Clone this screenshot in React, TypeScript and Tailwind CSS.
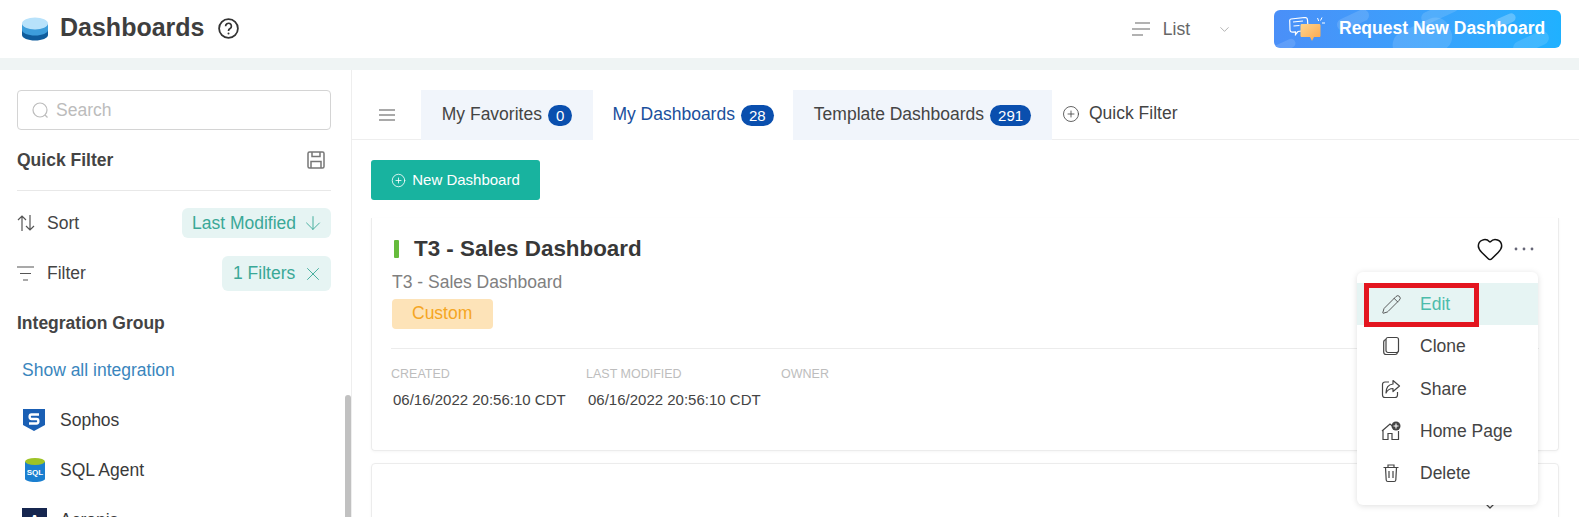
import { ChevronDown, CirclePlus, Heart, X, ArrowDown, Pencil } from 'lucide-react'

function StackLogo() {
  return (
    <svg width="26" height="26" viewBox="0 0 26 26">
      <path d="M0 13v6c0 3 6 5.500 13 5.500s13-2.500 13-5.500v-6z" fill="#0f5c9c" />
      <path d="M0 8v6c0 3 6 5.500 13 5.500s13-2.500 13-5.500V8z" fill="#3d9ddb" />
      <ellipse cx="13" cy="7.500" rx="13" ry="6" fill="#b8e2fb" />
    </svg>
  )
}

function HelpIcon() {
  return (
    <svg width="21" height="21" viewBox="0 0 21 21" fill="none" stroke="#333" strokeWidth="1.800">
      <circle cx="10.500" cy="10.500" r="9.400" />
      <path d="M7.600 8.200a2.900 2.900 0 1 1 4.500 2.400c-1 .6-1.600 1.200-1.600 2.300" strokeWidth="1.700" />
      <circle cx="10.500" cy="15.500" r="1" fill="#333" stroke="none" />
    </svg>
  )
}

function ListIcon() {
  return (
    <svg width="19" height="14" viewBox="0 0 19 14" fill="none" stroke="#666" strokeWidth="1.200">
      <path d="M3 1h15M0 7h18M0 13h11" />
    </svg>
  )
}

function ChatIcon() {
  return (
    <svg width="36" height="24" viewBox="0 0 36 24" fill="none">
      <defs>
        <linearGradient id="orange" x1="0" y1="0" x2="1" y2="1">
          <stop offset="0" stopColor="#fdd58f" />
          <stop offset="1" stopColor="#fba64c" />
        </linearGradient>
      </defs>
      <path d="M2 2l14-1.500c1.500 0 2.500 1 2.500 2.500l.5 8c0 1.500-1 2.500-2.500 2.500L9 14.500 6.500 17.500V15L3.500 15.200C2 15.200 1 14.200 1 13L.7 3.500C.7 2.800 1.200 2.200 2 2z" stroke="#fff" strokeWidth="1.200" />
      <path d="M4 5l10-1M4.500 9l6-.5" stroke="#fff" strokeWidth="1.100" />
      <path d="M13 7h17c1 0 1.500.5 1.500 1.500v10c0 1-.5 1.500-1.500 1.500h-5l-2 4-2-4h-8c-1 0-1.500-.5-1.500-1.500v-10C11.500 7.500 12 7 13 7z" fill="url(#orange)" />
      <path d="M28.500 1l1.200 3M33 .5l-1.500 3M36 6h-3" stroke="#fff" strokeWidth="1" />
    </svg>
  )
}

function ButtonBlobs() {
  return (
    <svg className="absolute left-0 top-0" width="287" height="38" viewBox="0 0 287 38" fill="#fff" fillOpacity="0.13">
      <rect x="-2" y="32" width="24" height="9" rx="4.500" transform="rotate(-25 10 36)" />
      <rect x="62" y="4" width="34" height="12" rx="6" transform="rotate(-25 79 10)" />
      <rect x="118" y="14" width="60" height="34" rx="14" transform="rotate(-25 148 30)" />
      <rect x="146" y="-4" width="40" height="12" rx="6" transform="rotate(-25 166 2)" />
      <rect x="220" y="6" width="22" height="9" rx="4.500" transform="rotate(-25 231 10)" fillOpacity="0.25" />
      <rect x="238" y="26" width="38" height="14" rx="7" transform="rotate(-25 257 33)" />
    </svg>
  )
}

function SearchGlyph() {
  return (
    <svg width="17" height="17" viewBox="0 0 17 17" fill="none" stroke="#bcbcbc" strokeWidth="1.200">
      <circle cx="8" cy="8" r="7" />
      <path d="M13 13l2.500 2.500" />
    </svg>
  )
}

function SaveGlyph() {
  return (
    <svg width="18" height="18" viewBox="0 0 18 18" fill="none" stroke="#777" strokeWidth="1.500">
      <path d="M2.500 1h13c.8 0 1.500.7 1.500 1.500v13c0 .8-.7 1.500-1.500 1.500h-13C1.700 17 1 16.300 1 15.500v-13C1 1.700 1.700 1 2.500 1z" />
      <path d="M5 1v4.500h8V1M4 17v-6.500h10V17" />
    </svg>
  )
}

function SortGlyph() {
  return (
    <svg width="18" height="16" viewBox="0 0 18 16" fill="none" stroke="#555" strokeWidth="1.200">
      <path d="M5 16V1M1 5l4-4 4 4M13 0v15M9 11l4 4 4-4" />
    </svg>
  )
}

function FilterLines() {
  return (
    <svg width="18" height="15" viewBox="0 0 18 15" fill="none" stroke="#555" strokeWidth="1.200">
      <path d="M0 1h17M3 7.500h11M6 14h5" />
    </svg>
  )
}

function DotsGlyph() {
  return (
    <svg width="20" height="4" viewBox="0 0 20 4" fill="#667">
      <circle cx="2" cy="2" r="1.400" />
      <circle cx="10" cy="2" r="1.400" />
      <circle cx="18" cy="2" r="1.400" />
    </svg>
  )
}

function SophosLogo() {
  return (
    <svg width="22" height="22" viewBox="0 0 22 22">
      <path d="M0 0h22v16l-11 6-11-6z" fill="#1a5fb4" />
      <path d="M16 5.500H8.500C6 5.500 6 10 8.500 10h5c2.500 0 2.500 4.500 0 4.500H6" fill="none" stroke="#fff" strokeWidth="2.400" />
    </svg>
  )
}

function SqlLogo() {
  return (
    <svg width="20" height="24" viewBox="0 0 20 24">
      <path d="M0 4v17c0 1.500 4.500 3 10 3s10-1.500 10-3V4z" fill="#1a7fd0" />
      <ellipse cx="10" cy="3.500" rx="10" ry="3.500" fill="#9dc326" />
      <text x="10" y="17" textAnchor="middle" fontSize="8" fontWeight="700" fill="#fff" fontFamily="Liberation Sans, sans-serif">SQL</text>
    </svg>
  )
}

function CloneGlyph() {
  return (
    <svg width="20" height="20" viewBox="0 0 20 20" fill="none" stroke="#444" strokeWidth="1.200">
      <rect x="5" y="1.500" width="12.500" height="15" rx="2" />
      <path d="M5 3.500C3.500 3.800 2.700 4.500 2.700 6v10c0 1.600 1 2.500 2.500 2.500h9c1.300 0 2-.6 2.300-2" />
    </svg>
  )
}

function ShareGlyph() {
  return (
    <svg width="20" height="20" viewBox="0 0 20 20" fill="none" stroke="#444" strokeWidth="1.200">
      <path d="M8 3H4C2.500 3 1.500 4 1.500 5.500V16c0 1.500 1 2.500 2.500 2.500h10c1.500 0 2.500-1 2.500-2.500v-3" />
      <path d="M12 1.500l6.500 5.500-6.500 5.500V9.500C9 9.500 6.500 11 5 14c0-5 2.500-8.500 7-9z" strokeLinejoin="round" />
    </svg>
  )
}

function HomePlusIcon() {
  return (
    <svg width="20" height="20" viewBox="0 0 20 20" fill="none" stroke="#444" strokeWidth="1.200">
      <path d="M1 10l8-7 3 2.500M2 9.500v9h5v-6h4v6h6.500V10" />
      <circle cx="15" cy="5" r="4.500" fill="#444" stroke="none" />
      <path d="M15 2.500v5M12.500 5h5" stroke="#fff" strokeWidth="1.100" />
    </svg>
  )
}

function TrashGlyph() {
  return (
    <svg width="20" height="20" viewBox="0 0 20 20" fill="none" stroke="#444" strokeWidth="1.200">
      <path d="M2.500 4.500h15M7 4.500V2h6v2.500M4.500 4.500l.7 12.500c.1 1 .7 1.500 1.600 1.500h6.400c.9 0 1.500-.5 1.600-1.500l.7-12.500M8 8v7M12 8v7" />
    </svg>
  )
}

function Tab(props: { label: string; count: string; active?: boolean; className: string }) {
  return (
    <div
      className={`h-[50px] pb-[2px] flex items-center justify-center gap-[6px] text-[17.500px] ${props.className} ${
        props.active ? 'bg-white text-[#1a4f9c]' : 'bg-[#f1f5fb] text-[#444]'
      }`}
    >
      {props.label}
      <span className="h-[21px] px-[8px] rounded-full bg-[#0a4fae] text-white text-[15px] leading-[21px] mt-[2px]">{props.count}</span>
    </div>
  )
}

function MenuItem(props: { icon: React.ReactNode; label: string; active?: boolean }) {
  return (
    <div className={`h-[42.300px] flex items-center text-[17.500px] ${props.active ? 'bg-[#e6f4f3] text-[#4cbcab]' : 'text-[#444]'}`}>
      <div className="w-[63px] pl-[24px] flex text-[#444]">{props.icon}</div>
      {props.label}
    </div>
  )
}

export default function App() {
  return (
    <div className="h-[517px] overflow-hidden bg-white text-[#444] font-['Liberation_Sans',Arial,sans-serif]">
      <header className="h-[58px] flex items-center pl-[22px] pr-[18px]">
        <StackLogo />
        <h1 className="ml-[12px] -mt-[2px] text-[25px] font-bold text-[#3e3e3e]">Dashboards</h1>
        <div className="ml-[14px] -mt-[2px]">
          <HelpIcon />
        </div>
        <div className="ml-auto flex items-center">
          <ListIcon />
          <span className="ml-[12px] text-[17.500px] text-[#666]">List</span>
          <ChevronDown className="ml-[27px] w-[15px] h-[15px] text-[#999]" strokeWidth={1.200} />
          <button className="ml-[42px] relative overflow-hidden w-[287px] h-[38px] rounded-[6px] bg-gradient-to-r from-[#4a8ff8] to-[#1fb1ff] flex items-center pl-[15px]">
            <ButtonBlobs />
            <span className="relative flex">
              <ChatIcon />
            </span>
            <span className="relative ml-[14px] -mt-[2px] text-[17.500px] font-bold text-white">Request New Dashboard</span>
          </button>
        </div>
      </header>
      <div className="h-[12px] bg-[#eff4f4]" />
      <div className="flex h-[447px]">
        <aside className="relative w-[352px] shrink-0 border-r border-[#eeeeee] px-[17px] pt-[20px]">
          <div className="w-[314px]">
            <div className="h-[40px] border border-[#d4d4d4] rounded-[4px] flex items-center pl-[14px] text-[17.500px] text-[#bcbcbc]">
              <SearchGlyph />
              <span className="ml-[7px]">Search</span>
            </div>
            <div className="mt-[16px] h-[28px] flex items-center justify-between text-[17.500px] font-bold text-[#444]">
              Quick Filter
              <span className="mr-[6px] flex">
                <SaveGlyph />
              </span>
            </div>
            <div className="mt-[16px] border-t border-[#e8e8e8]" />
            <div className="mt-[17px] h-[30px] flex items-center justify-between text-[17.500px]">
              <span className="flex items-center">
                <SortGlyph />
                <span className="ml-[12px]">Sort</span>
              </span>
              <span className="h-[30px] w-[149px] rounded-[6px] bg-[#e6f4f3] text-[#3aa897] flex items-center justify-between pl-[10px] pr-[7px]">
                Last Modified
                <ArrowDown className="w-[22px] h-[22px]" strokeWidth={1} />
              </span>
            </div>
            <div className="mt-[18px] h-[35px] flex items-center justify-between text-[17.500px]">
              <span className="flex items-center">
                <FilterLines />
                <span className="ml-[12px]">Filter</span>
              </span>
              <span className="h-[35px] w-[109px] rounded-[6px] bg-[#e6f4f3] text-[#3aa897] flex items-center justify-between pl-[11px] pr-[7px]">
                1 Filters
                <X className="w-[22px] h-[22px]" strokeWidth={1} />
              </span>
            </div>
            <div className="mt-[22px] text-[17.500px] font-bold leading-[20px]">Integration Group</div>
            <div className="mt-[27px] ml-[5px] text-[17.500px] leading-[20px] text-[#3a86bd]">Show all integration</div>
            <div className="mt-[25px] h-[30px] flex items-center text-[17.500px] text-[#3a3a3a]">
              <span className="w-[24px] ml-[6px] flex justify-start">
                <SophosLogo />
              </span>
              <span className="ml-[13px]">Sophos</span>
            </div>
            <div className="mt-[20px] h-[30px] flex items-center text-[17.500px] text-[#3a3a3a]">
              <span className="w-[24px] ml-[8px] flex justify-start">
                <SqlLogo />
              </span>
              <span className="ml-[11px]">SQL Agent</span>
            </div>
            <div className="mt-[20px] h-[30px] flex items-center text-[17.500px] text-[#3a3a3a]">
              <span className="w-[25px] h-[25px] ml-[5px] bg-[#16264f] text-white text-[14px] font-bold flex items-center justify-center">A</span>
              <span className="ml-[13px]">Acronis</span>
            </div>
          </div>
          <div className="absolute right-0 top-[325px] w-[6px] h-[130px] rounded-t-[3px] bg-[#c1c1c1]" />
        </aside>
        <main className="relative flex-1 min-w-0">
          <div className="mt-[20px] h-[50px] flex items-stretch border-b border-[#eeeeee]">
            <div className="w-[69px] flex items-center justify-center">
              <svg width="16" height="12" viewBox="0 0 16 12" fill="none" stroke="#555" strokeWidth="1.100">
                <path d="M0 1h16M0 6h16M0 11h16" />
              </svg>
            </div>
            <Tab label="My Favorites" count="0" className="w-[172px]" />
            <Tab label="My Dashboards" count="28" active className="w-[200px]" />
            <Tab label="Template Dashboards" count="291" className="w-[259px]" />
            <div className="ml-[10px] pb-[2px] flex items-center text-[17.500px] text-[#444]">
              <CirclePlus className="w-[18px] h-[18px]" strokeWidth={1.100} />
              <span className="ml-[9px]">Quick Filter</span>
            </div>
          </div>
          <div className="px-[19px]">
            <button className="mt-[20px] w-[169px] h-[40px] rounded-[3px] bg-[#18b39f] text-white text-[15px] flex items-center justify-center gap-[6px]">
              <CirclePlus className="w-[15px] h-[15px]" strokeWidth={1.300} />
              New Dashboard
            </button>
            <div className="mt-[18px] w-[1188px] h-[233px] rounded-b-[4px] border border-t-0 border-[#ececec] shadow-[0_1px_3px_rgba(0,0,0,0.04)] px-[19px] pt-[17px]">
              <div className="flex items-center justify-between">
                <div className="flex items-center">
                  <span className="ml-[3px] w-[5px] h-[18px] rounded-[1px] bg-[#66bb3c]" />
                  <span className="ml-[15px] text-[22.400px] font-bold leading-[28px] text-[#383838]">T3 - Sales Dashboard</span>
                </div>
                <div className="flex items-center mr-[5px]">
                  <Heart className="w-[28px] h-[28px] text-[#111]" strokeWidth={1.300} />
                  <span className="ml-[10px] flex">
                    <DotsGlyph />
                  </span>
                </div>
              </div>
              <div className="mt-[7px] ml-[1px] text-[17.500px] leading-[24px] text-[#808080]">T3 - Sales Dashboard</div>
              <div className="mt-[5px] ml-[1px] w-[101px] h-[30px] rounded-[4px] bg-[#fde3b8] pl-[20px] text-[17.500px] leading-[28px] text-[#f5a623]">Custom</div>
              <div className="mt-[19px] border-t border-[#ececec]" />
              <div className="mt-[18px] flex">
                <div className="w-[195px]">
                  <div className="text-[12.500px] leading-[14px] text-[#bdbdbd]">CREATED</div>
                  <div className="mt-[10px] ml-[2px] text-[15px] leading-[18px] text-[#444]">06/16/2022 20:56:10 CDT</div>
                </div>
                <div className="w-[195px]">
                  <div className="text-[12.500px] leading-[14px] text-[#bdbdbd]">LAST MODIFIED</div>
                  <div className="mt-[10px] ml-[2px] text-[15px] leading-[18px] text-[#444]">06/16/2022 20:56:10 CDT</div>
                </div>
                <div className="text-[12.500px] leading-[14px] text-[#bdbdbd]">OWNER</div>
              </div>
            </div>
            <div className="mt-[12px] w-[1188px] h-[80px] rounded-[4px] border border-[#ececec] shadow-[0_1px_3px_rgba(0,0,0,0.04)] flex justify-end pr-[60px] pt-[34px]">
              <ChevronDown className="w-[16px] h-[16px] text-[#444]" strokeWidth={1.800} />
            </div>
          </div>
          <div className="absolute left-[1005px] top-[202px] w-[181px] h-[233px] pt-[11px] bg-white rounded-[6px] shadow-[0_1px_6px_rgba(0,0,0,0.13)]">
            <div className="relative">
              <MenuItem active label="Edit" icon={<Pencil className="w-[21px] h-[21px]" strokeWidth={1} />} />
              <div className="absolute left-[7px] top-0 w-[115px] h-[44px] border-[5px] border-[#e3151f]" />
            </div>
            <MenuItem label="Clone" icon={<CloneGlyph />} />
            <MenuItem label="Share" icon={<ShareGlyph />} />
            <MenuItem label="Home Page" icon={<HomePlusIcon />} />
            <MenuItem label="Delete" icon={<TrashGlyph />} />
          </div>
        </main>
      </div>
    </div>
  )
}
